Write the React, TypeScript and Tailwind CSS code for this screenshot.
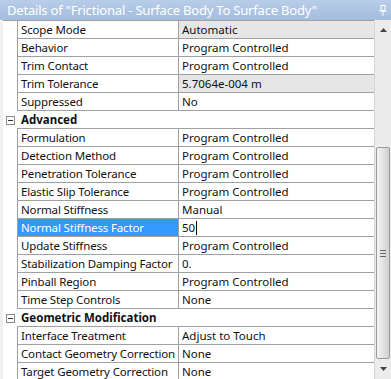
import React from 'react'

type Row =
  | { kind: 'prop'; name: string; value: string; readOnly?: boolean; selected?: boolean; editing?: boolean }
  | { kind: 'section'; name: string }

const rows: Row[] = [
  { kind: 'prop', name: 'Scope Mode', value: 'Automatic', readOnly: true },
  { kind: 'prop', name: 'Behavior', value: 'Program Controlled' },
  { kind: 'prop', name: 'Trim Contact', value: 'Program Controlled' },
  { kind: 'prop', name: 'Trim Tolerance', value: '5.7064e-004 m', readOnly: true },
  { kind: 'prop', name: 'Suppressed', value: 'No' },
  { kind: 'section', name: 'Advanced' },
  { kind: 'prop', name: 'Formulation', value: 'Program Controlled' },
  { kind: 'prop', name: 'Detection Method', value: 'Program Controlled' },
  { kind: 'prop', name: 'Penetration Tolerance', value: 'Program Controlled' },
  { kind: 'prop', name: 'Elastic Slip Tolerance', value: 'Program Controlled' },
  { kind: 'prop', name: 'Normal Stiffness', value: 'Manual' },
  { kind: 'prop', name: 'Normal Stiffness Factor', value: '50', selected: true, editing: true },
  { kind: 'prop', name: 'Update Stiffness', value: 'Program Controlled' },
  { kind: 'prop', name: 'Stabilization Damping Factor', value: '0.' },
  { kind: 'prop', name: 'Pinball Region', value: 'Program Controlled' },
  { kind: 'prop', name: 'Time Step Controls', value: 'None' },
  { kind: 'section', name: 'Geometric Modification' },
  { kind: 'prop', name: 'Interface Treatment', value: 'Adjust to Touch' },
  { kind: 'prop', name: 'Contact Geometry Correction', value: 'None' },
  { kind: 'prop', name: 'Target Geometry Correction', value: 'None' },
]

function MinusBox() {
  return (
    <div className="w-[9px] h-[9px] border border-[#8c8c8c] bg-white flex items-center justify-center">
      <div className="w-[5px] h-px bg-[#333]" />
    </div>
  )
}

function PropertyRow({ row }: { row: Row }) {
  if (row.kind === 'section') {
    return (
      <div className="flex h-[18px] shrink-0">
        <div className="w-[14px] flex items-center justify-center bg-white">
          <MinusBox />
        </div>
        <div className="flex-1 border-b border-[#a0a0a0] bg-white pl-[4px] flex items-center font-bold text-[#111] whitespace-nowrap">
          {row.name}
        </div>
      </div>
    )
  }
  return (
    <div className="flex h-[18px] shrink-0">
      <div className="w-[14px] bg-white" />
      <div
        className={`w-[162px] border-l border-r border-b border-[#a0a0a0] pl-[3px] flex items-center whitespace-nowrap overflow-hidden tracking-[-0.15px] ${
          row.selected ? 'bg-[#3399ff] text-white' : 'bg-white text-[#111]'
        }`}
      >
        {row.name}
      </div>
      <div
        className={`flex-1 border-b border-[#a0a0a0] pl-[3px] flex items-center text-[#111] whitespace-nowrap ${
          row.readOnly ? 'bg-[#e6e6e6]' : 'bg-white'
        }`}
      >
        {row.value}
        {row.editing && <span className="w-px h-[14px] bg-black ml-px" />}
      </div>
    </div>
  )
}

function Scrollbar() {
  return (
    <div className="w-[17px] bg-[#ececec] flex flex-col items-center border-l border-[#d4d4d4]">
      <div className="h-[20px] flex items-center justify-center shrink-0">
        <svg width="7" height="4" viewBox="0 0 7 4">
          <path d="M0 4 L3.5 0 L7 4 Z" fill="#444" />
        </svg>
      </div>
      <div className="h-[107px] shrink-0" />
      <div className="w-[14px] h-[212px] shrink-0 rounded-[2px] border border-[#9b9b9b] bg-gradient-to-r from-[#f4f4f4] via-[#e2e2e2] to-[#cfcfcf] flex items-center justify-center">
        <div className="flex flex-col gap-[2px]">
          <div className="w-[6px] h-px bg-[#666]" />
          <div className="w-[6px] h-px bg-[#666]" />
          <div className="w-[6px] h-px bg-[#666]" />
        </div>
      </div>
      <div className="flex-1 flex items-center justify-center">
        <svg width="7" height="4" viewBox="0 0 7 4">
          <path d="M0 0 L3.5 4 L7 0 Z" fill="#444" />
        </svg>
      </div>
    </div>
  )
}

export default function App() {
  return (
    <div
      className="w-[391px] h-[379px] overflow-hidden bg-[#dfe3e8] flex flex-col text-[11.5px] leading-none"
      style={{ fontFamily: '"Noto Sans", "Open Sans", sans-serif' }}
    >
      <div className="h-[20px] shrink-0 bg-gradient-to-b from-[#b8cde8] to-[#a3bde0] flex items-center justify-between pl-[7px] pr-[4px]">
        <span className="text-white text-[13px] tracking-[-0.2px] whitespace-nowrap">
          Details of "Frictional - Surface Body To Surface Body"
        </span>
        <svg width="8" height="11" viewBox="0 0 8 11">
          <rect x="2" y="0.5" width="4" height="5" fill="none" stroke="#fff" strokeWidth="1" />
          <line x1="0" y1="6" x2="8" y2="6" stroke="#fff" strokeWidth="1" />
          <line x1="4" y1="6" x2="4" y2="11" stroke="#fff" strokeWidth="1" />
        </svg>
      </div>
      <div className="flex flex-1 min-h-0 pl-[3px] bg-[#f0f0f0]">
        <div className="flex-1 flex flex-col border-t border-[#a0a0a0] bg-white overflow-hidden">
          {rows.map((r, i) => (
            <PropertyRow key={i} row={r} />
          ))}
        </div>
        <Scrollbar />
      </div>
    </div>
  )
}
